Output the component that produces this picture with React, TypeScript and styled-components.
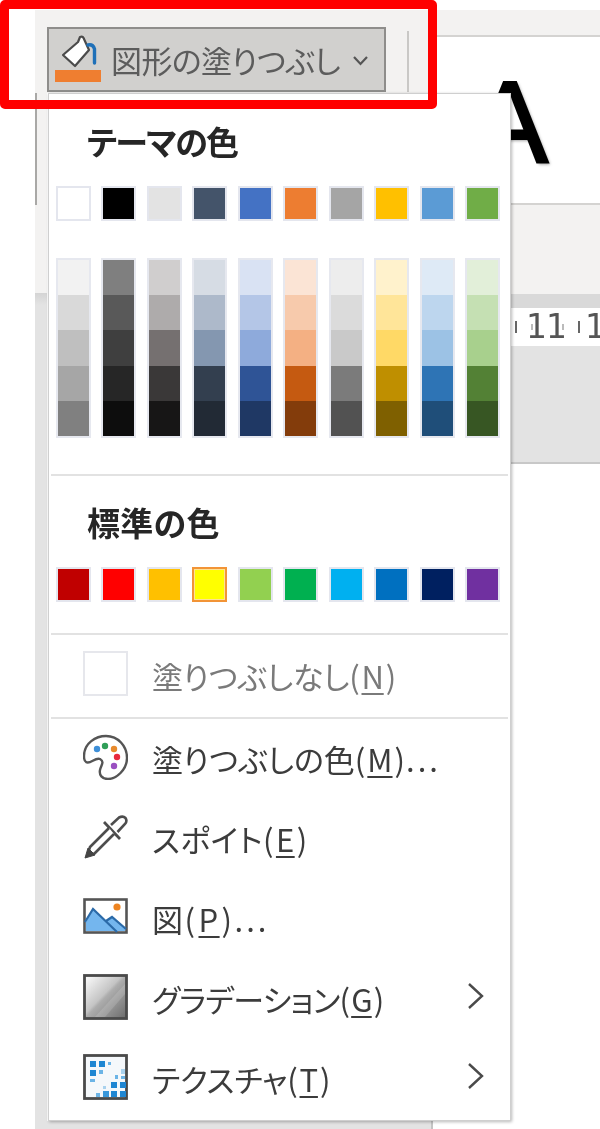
import React from 'react';
import styled, { createGlobalStyle } from 'styled-components';

const GlobalStyle = createGlobalStyle`
  html, body { margin: 0; padding: 0; background: #fff; }
  body { font-family: "Noto Sans CJK JP", "Noto Sans", sans-serif; }
  * { box-sizing: border-box; }
`;

const Page = styled.div`
  position: relative;
  display: flex;
  width: 600px;
  height: 1129px;
  overflow: hidden;
  background: #fff;
  filter: blur(0.45px);
`;
const LeftMargin = styled.div`
  width: 35px;
  flex: none;
`;
const Rail = styled.div`
  width: 12px;
  flex: none;
  display: flex;
  flex-direction: column;
  padding-top: 10px;
`;
const RailTop = styled.div`
  height: 283px;
  background: #f3f2f1;
  padding-top: 83px;
`;
const RailLine = styled.div`
  width: 2px;
  height: 112px;
  background: #a9a8a6;
`;
const RailBottom = styled.div`
  flex: 1;
  background: linear-gradient(#d4d4d4, #e3e3e3 12px);
`;
const Center = styled.div`
  width: 463px;
  flex: none;
  display: flex;
  flex-direction: column;
  padding-top: 10px;
`;
const TopRow = styled.div`
  display: flex;
  height: 83px;
`;
const Ribbon = styled.div`
  width: 390px;
  display: flex;
  align-items: flex-start;
  padding-top: 17px;
  background: #f3f2f1;
`;
const FillButton = styled.div`
  width: 339px;
  height: 65px;
  flex: none;
  display: flex;
  align-items: center;
  padding-left: 6px;
  background: #d1d0ce;
  border: 2px solid #8e8d8b;
  color: #5c5c5c;
`;
const ButtonIcon = styled.svg`
  width: 47px;
  height: 50px;
  flex: none;
  margin-top: -2px;
`;
const ButtonLabel = styled.span`
  margin-left: 9px;
  font-size: 31px;
  line-height: 40px;
  font-feature-settings: "palt";
  letter-spacing: -0.6px;
  white-space: nowrap;
`;
const ButtonChevron = styled.svg`
  width: 17px;
  height: 12px;
  flex: none;
  margin-left: 12px;
  margin-top: 2px;
`;
const RibbonDivider = styled.div`
  width: 2px;
  height: 61px;
  margin: 4px 0 0 21px;
  background: #c9c8c6;
`;
const TopStrip = styled.div`
  flex: 1;
  height: 27px;
  background: #f3f2f1;
  border-bottom: 2px solid #d4d3d1;
`;
const Footer = styled.div`
  margin-top: auto;
  height: 8px;
  width: 386px;
  background: #e3e3e3;
  border-right: 2px solid #c4c4c4;
`;
const Side = styled.div`
  flex: 1;
  display: flex;
  flex-direction: column;
  padding-top: 10px;
`;
const SideStrip = styled.div`
  height: 27px;
  flex: none;
  background: #f3f2f1;
  border-bottom: 2px solid #d4d3d1;
`;
const Slide = styled.div`
  height: 168px;
  flex: none;
  border-bottom: 2px solid #d4d3d1;
`;
const SidePanel = styled.div`
  height: 89px;
  flex: none;
  background: #f3f2f1;
`;
const RulerTrack = styled.div`
  height: 14px;
  flex: none;
  background: #d9d9d9;
`;
const Ruler = styled.div`
  height: 38px;
  flex: none;
  display: flex;
  align-items: center;
  padding-left: 5px;
  overflow: hidden;
  background: #fff;
  color: #555;
`;
const RulerTick = styled.i`
  width: 2px;
  height: 12px;
  flex: none;
  background: #666;
`;
const RulerDigit = styled.span<{ $gap: number; $dot?: number }>`
  position: relative;
  width: 20px;
  flex: none;
  text-align: center;
  font-family: "DejaVu Sans", sans-serif;
  font-size: 33px;
  line-height: 38px;
  margin-left: ${(p) => p.$gap}px;
  &::before {
    content: '';
    display: ${(p) => (p.$dot === undefined ? 'none' : 'block')};
    position: absolute;
    left: ${(p) => p.$dot ?? 0}px;
    top: 16px;
    width: 2px;
    height: 6px;
    background: #bbb;
  }
`;
const RulerGap = styled.span`
  width: 12px;
  flex: none;
`;
const Canvas = styled.div`
  height: 116px;
  flex: none;
  background: #e3e3e3;
`;
const CanvasEdge = styled.div`
  height: 2px;
  flex: none;
  background: #c8c8c8;
`;
const SlideLetter = styled.div`
  position: absolute;
  left: 471px;
  top: 58px;
  font-family: "Liberation Sans", sans-serif;
  font-size: 116px;
  line-height: 130px;
  color: #000;
  -webkit-text-stroke: 2px #000;
  text-shadow: 2px 2px 3px rgba(0, 0, 0, 0.35);
`;

const Menu = styled.div`
  position: absolute;
  left: 48px;
  top: 93px;
  width: 463px;
  height: 1028px;
  background: #fff;
  border: 1px solid #cfcfcf;
  box-shadow: 1px 1px 3px rgba(0, 0, 0, 0.28);
`;
const PaletteBlock = styled.div`
  padding: 0 0 0 7px;
`;
const Heading = styled.div<{ $top: number; $track: number }>`
  margin-top: ${(p) => p.$top}px;
  padding-left: 31px;
  height: 48px;
  font-size: 33px;
  line-height: 48px;
  font-weight: 700;
  font-feature-settings: "palt";
  letter-spacing: ${(p) => p.$track}px;
  color: #262626;
  white-space: nowrap;
`;
const SwatchRow = styled.div`
  width: 444px;
  margin-top: 21px;
  display: flex;
  justify-content: space-between;
`;
const Swatch = styled.div<{ $color: string; $selected?: boolean }>`
  width: 35px;
  height: 35px;
  background: ${(p) => p.$color};
  border: 2px solid ${(p) => (p.$selected ? '#f29436' : '#e4e6ee')};
  box-shadow: ${(p) => (p.$selected ? 'inset 0 0 0 1px #ffe294' : 'none')};
`;
const ShadeRow = styled(SwatchRow)`
  margin-top: 37px;
`;
const ShadeColumn = styled.div`
  width: 35px;
  height: 180px;
  display: flex;
  flex-direction: column;
  border: 2px solid #e6e8ef;
`;
const Shade = styled.div<{ $color: string }>`
  flex: 1;
  background: ${(p) => p.$color};
`;
const Separator = styled.div<{ $top: number }>`
  height: 2px;
  margin: ${(p) => p.$top}px 2px 0 2px;
  background: #e2e2e2;
`;
const NoFillRow = styled.div`
  height: 82px;
  display: flex;
  align-items: center;
  padding-left: 34px;
  color: #7a7a7a;
`;
const EmptyBox = styled.div`
  width: 45px;
  height: 45px;
  flex: none;
  margin-top: -6px;
  border: 2px solid #e6e7ec;
`;
const MenuRow = styled.div`
  height: 80px;
  display: flex;
  align-items: center;
  padding-left: 34px;
  color: #3c3c3c;
`;
const RowIcon = styled.svg`
  width: 45px;
  height: 46px;
  flex: none;
  margin-top: -4px;
`;
const RowLabel = styled.span<{ $track?: number }>`
  margin-left: 24px;
  font-size: 31px;
  line-height: 40px;
  font-feature-settings: "palt";
  letter-spacing: ${(p) => p.$track ?? 0}px;
  white-space: nowrap;
`;
const AccessKey = styled.span`
  padding: 0 2px;
  text-decoration: underline;
  text-decoration-thickness: 2px;
  text-underline-offset: 4px;
`;
const Dots = styled.span`
  letter-spacing: 3px;
  margin-left: 1px;
`;
const Chevron = styled.svg`
  width: 18px;
  height: 28px;
  flex: none;
  margin-left: auto;
  margin-right: 25px;
  margin-top: -7px;
`;
const Highlight = styled.div`
  position: absolute;
  left: 0;
  top: 0;
  width: 437px;
  height: 109px;
  border: 9px solid #ff0000;
  border-radius: 5px;
`;

const theme = ['#ffffff', '#000000', '#e3e3e3', '#44546a', '#4472c4', '#ed7d31', '#a5a5a5', '#ffc000', '#5b9bd5', '#70ad47'];
const shades = [
  ['#f2f2f2', '#d9d9d9', '#bfbfbf', '#a6a6a6', '#808080'],
  ['#7f7f7f', '#595959', '#3f3f3f', '#262626', '#0d0d0d'],
  ['#d0cece', '#aeabab', '#757070', '#3a3838', '#171616'],
  ['#d6dce4', '#adb9ca', '#8497b0', '#333f4f', '#222a35'],
  ['#d9e2f3', '#b4c6e7', '#8eaadb', '#2f5496', '#1f3864'],
  ['#fbe4d5', '#f7caac', '#f4b083', '#c55a11', '#833c0b'],
  ['#ededed', '#dbdbdb', '#c9c9c9', '#7b7b7b', '#525252'],
  ['#fff2cc', '#ffe599', '#ffd966', '#bf8f00', '#7f6000'],
  ['#deeaf6', '#bdd6ee', '#9cc2e5', '#2e74b5', '#1f4e79'],
  ['#e2efd9', '#c5e0b3', '#a8d08d', '#538135', '#375623'],
];
const standard = ['#c00000', '#ff0000', '#ffc000', '#ffff00', '#92d050', '#00b050', '#00b0f0', '#0070c0', '#002060', '#7030a0'];
const textureSquares: [number, number, number, number, string][] = [
  [7, 7, 6, 6, '#1f86d2'], [16, 7, 6, 6, '#1f86d2'], [25, 8, 3, 3, '#6cb4e6'],
  [7, 16, 6, 6, '#1f86d2'], [16, 16, 4, 4, '#6cb4e6'], [7, 25, 5, 3, '#6cb4e6'],
  [38, 15, 4, 5, '#a9d2ee'], [38, 22, 4, 3, '#6cb4e6'], [32, 21, 3, 4, '#6cb4e6'],
  [28, 28, 6, 6, '#1f86d2'], [37, 28, 6, 6, '#1f86d2'], [28, 37, 6, 6, '#1f86d2'],
  [37, 37, 6, 6, '#1f86d2'], [20, 37, 6, 6, '#3a97da'], [13, 39, 4, 4, '#6cb4e6'],
  [20, 32, 3, 3, '#a9d2ee'],
];

const Arrow = () => (
  <Chevron viewBox="0 0 18 28">
    <path d="M2 2 L15 14 L2 26" fill="none" stroke="#4a4a4a" strokeWidth="2.4" />
  </Chevron>
);

export default function App() {
  return (
    <Page>
      <GlobalStyle />
      <LeftMargin />
      <Rail>
        <RailTop>
          <RailLine />
        </RailTop>
        <RailBottom />
      </Rail>
      <Center>
        <TopRow>
          <Ribbon>
            <FillButton>
              <ButtonIcon viewBox="0 0 47 50">
                <path d="M8 21 L23 8 L25 3 Q28 2 29 5 L34 16 L20 32 Z" fill="#fff" stroke="#4b4b4b" strokeWidth="2.2" strokeLinejoin="round" />
                <path d="M33 11 Q38 10 39.5 15 L39.5 29" fill="none" stroke="#1f70b8" strokeWidth="3.4" strokeLinecap="round" />
                <rect x="0" y="36" width="46" height="12" fill="#ef7e30" />
              </ButtonIcon>
              <ButtonLabel>図形の塗りつぶし</ButtonLabel>
              <ButtonChevron viewBox="0 0 17 12">
                <path d="M2 2 L8.5 9 L15 2" fill="none" stroke="#555" strokeWidth="2.2" />
              </ButtonChevron>
            </FillButton>
            <RibbonDivider />
          </Ribbon>
          <TopStrip />
        </TopRow>
        <Footer />
      </Center>
      <Side>
        <SideStrip />
        <Slide />
        <SidePanel />
        <RulerTrack />
        <Ruler>
          <RulerTick />
          <RulerDigit $gap={9} $dot={5}>1</RulerDigit>
          <RulerDigit $gap={0} $dot={16}>1</RulerDigit>
          <RulerGap />
          <RulerTick />
          <RulerDigit $gap={5}>1</RulerDigit>
        </Ruler>
        <Canvas />
        <CanvasEdge />
      </Side>
      <SlideLetter>A</SlideLetter>
      <Menu>
        <PaletteBlock>
          <Heading $top={23} $track={-1.6}>テーマの色</Heading>
          <SwatchRow>
            {theme.map((c) => (
              <Swatch key={c} $color={c} />
            ))}
          </SwatchRow>
          <ShadeRow>
            {shades.map((col, i) => (
              <ShadeColumn key={i}>
                {col.map((c) => (
                  <Shade key={c} $color={c} />
                ))}
              </ShadeColumn>
            ))}
          </ShadeRow>
        </PaletteBlock>
        <Separator $top={36} />
        <PaletteBlock>
          <Heading $top={22} $track={0.3}>標準の色</Heading>
          <SwatchRow>
            {standard.map((c) => (
              <Swatch key={c} $color={c} $selected={c === '#ffff00'} />
            ))}
          </SwatchRow>
        </PaletteBlock>
        <Separator $top={31} />
        <NoFillRow>
          <EmptyBox />
          <RowLabel $track={-0.2}>
            塗りつぶしなし(<AccessKey>N</AccessKey>)
          </RowLabel>
        </NoFillRow>
        <Separator $top={0} />
        <MenuRow>
          <RowIcon viewBox="0 0 45 46">
            <path d="M1 22 C1 9 13 2 23 2 C35 2 44 12 44 24 C44 36 33 45 25 45 C19 45 16 41 17 36 C18 31 22 28 17 25 C12 23 7 31 3 28 C1 27 1 24 1 22 Z" fill="#fff" stroke="#555" strokeWidth="2.4" />
            <circle cx="14" cy="15" r="3.2" fill="#3d8fd8" />
            <circle cx="22" cy="12" r="3.2" fill="#2f9e58" />
            <circle cx="31" cy="15" r="3.2" fill="#e88a2c" />
            <circle cx="34" cy="23" r="3.2" fill="#e8283c" />
            <circle cx="31" cy="32" r="3.2" fill="#9a4fc0" />
          </RowIcon>
          <RowLabel>
            塗りつぶしの色(<AccessKey>M</AccessKey>)<Dots>...</Dots>
          </RowLabel>
        </MenuRow>
        <MenuRow>
          <RowIcon viewBox="0 0 45 46">
            <path d="M28 11 L36 3.5 Q40 1.5 42.5 4 Q44.5 7 42 10 L34.5 18" fill="none" stroke="#4d4d4d" strokeWidth="2.6" />
            <path d="M21 8 L37 25" fill="none" stroke="#4d4d4d" strokeWidth="2.8" />
            <path d="M26 14 L7 33 L5 39 L11 40 L31 20" fill="#fff" stroke="#4d4d4d" strokeWidth="2.6" strokeLinejoin="round" />
            <path d="M2 44 L5 34 L12 41 Z" fill="#444" stroke="#444" strokeLinejoin="round" />
          </RowIcon>
          <RowLabel $track={0.5}>
            スポイト(<AccessKey>E</AccessKey>)
          </RowLabel>
        </MenuRow>
        <MenuRow>
          <RowIcon viewBox="0 0 45 46">
            <rect x="1.5" y="5.5" width="42" height="33" fill="#fff" stroke="#555" strokeWidth="2.6" />
            <path d="M3 28 L10 15 L34 37 L3 37 Z" fill="#74b6ee" />
            <path d="M23 27 L29 23 L42 34 L42 37 L33 37 Z" fill="#74b6ee" />
            <path d="M2 28 L10 15 L34 38 M23 27 L29 23 L43 35" fill="none" stroke="#2b6aa8" strokeWidth="2.2" />
            <circle cx="34" cy="13" r="3.6" fill="#ee8420" />
          </RowIcon>
          <RowLabel $track={1.5}>
            図(<AccessKey>P</AccessKey>)<Dots>...</Dots>
          </RowLabel>
        </MenuRow>
        <MenuRow>
          <RowIcon viewBox="0 0 45 46">
            <defs>
              <linearGradient id="menuGrad" x1="0" y1="0" x2="1" y2="1">
                <stop offset="0" stopColor="#ffffff" />
                <stop offset="0.45" stopColor="#c4c4c4" />
                <stop offset="0.5" stopColor="#adadad" />
                <stop offset="1" stopColor="#6a6a6a" />
              </linearGradient>
            </defs>
            <rect x="1.5" y="1.5" width="42" height="43" fill="url(#menuGrad)" stroke="#4a4a4a" strokeWidth="2.8" />
            <path d="M12 43 L42 10 L42 20 L22 43 Z" fill="#fff" opacity="0.14" />
          </RowIcon>
          <RowLabel $track={-0.8}>
            グラデーション(<AccessKey>G</AccessKey>)
          </RowLabel>
          <Arrow />
        </MenuRow>
        <MenuRow>
          <RowIcon viewBox="0 0 45 46">
            <rect x="1.5" y="1.5" width="42" height="43" fill="#f5f8fb" stroke="#4a4a4a" strokeWidth="2.8" />
            {textureSquares.map(([x, y, w, h, c]) => (
              <rect key={`${x}-${y}`} x={x} y={y} width={w} height={h} fill={c} />
            ))}
          </RowIcon>
          <RowLabel $track={-0.2}>
            テクスチャ(<AccessKey>T</AccessKey>)
          </RowLabel>
          <Arrow />
        </MenuRow>
      </Menu>
      <Highlight />
    </Page>
  );
}
